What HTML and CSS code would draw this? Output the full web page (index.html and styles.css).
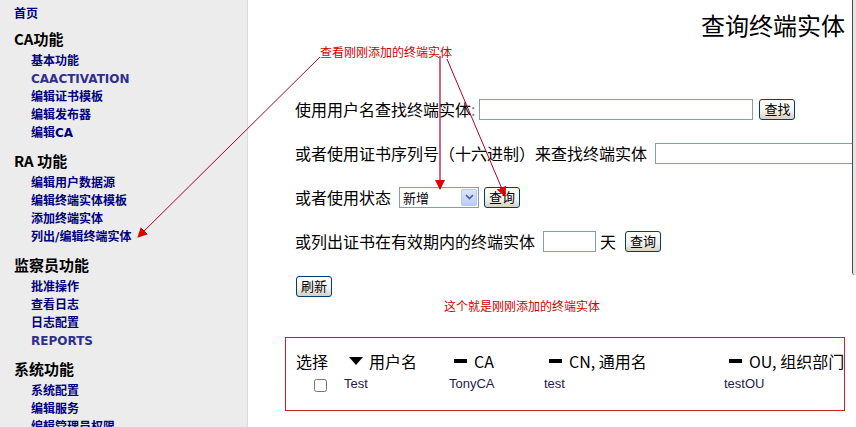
FILE: index.html
```html
<!DOCTYPE html>
<html lang="zh-CN">
<head>
    <meta charset="UTF-8">
    <title>查询终端实体</title>
    <link rel="stylesheet" href="styles.css">
</head>
<body>
    <div class="page">
        <nav class="menu">
            <a class="home" href="#">首页</a>

            <h3>CA功能</h3>
            <ul>
                <li><a href="#">基本功能</a></li>
                <li><a class="visited" href="#">CAACTIVATION</a></li>
                <li><a href="#">编辑证书模板</a></li>
                <li><a href="#">编辑发布器</a></li>
                <li><a href="#">编辑CA</a></li>
            </ul>

            <h3>RA 功能</h3>
            <ul>
                <li><a href="#">编辑用户数据源</a></li>
                <li><a href="#">编辑终端实体模板</a></li>
                <li><a href="#">添加终端实体</a></li>
                <li><a href="#">列出/编辑终端实体</a></li>
            </ul>

            <h3>监察员功能</h3>
            <ul>
                <li><a href="#">批准操作</a></li>
                <li><a href="#">查看日志</a></li>
                <li><a href="#">日志配置</a></li>
                <li><a class="visited" href="#">REPORTS</a></li>
            </ul>

            <h3>系统功能</h3>
            <ul>
                <li><a href="#">系统配置</a></li>
                <li><a href="#">编辑服务</a></li>
                <li><a href="#">编辑管理员权限</a></li>
            </ul>
        </nav>

        <main class="content">
            <h1>查询终端实体</h1>

            <form class="search">
                <div class="row">
                    <span class="label">使用用户名查找终端实体<span class="colon">:</span></span>
                    <input class="text wide" type="text">
                    <button class="btn" type="button">查找</button>
                </div>
                <div class="row">
                    <span class="label">或者使用证书序列号（十六进制）来查找终端实体</span>
                    <input class="text serial" type="text">
                </div>
                <div class="row">
                    <span class="label">或者使用状态</span>
                    <span class="select">
                        <span class="select-value">新增</span>
                        <span class="select-btn">
                            <svg width="9" height="6" viewBox="0 0 9 6"><path d="M1 1 L4.5 4.5 L8 1" fill="none" stroke="#4d6185" stroke-width="1.6"/></svg>
                        </span>
                    </span>
                    <button class="btn" type="button">查询</button>
                </div>
                <div class="row">
                    <span class="label">或列出证书在有效期内的终端实体</span>
                    <input class="text days" type="text">
                    <span class="unit">天</span>
                    <button class="btn" type="button">查询</button>
                </div>
                <div class="refresh-row">
                    <button class="btn" type="button">刷新</button>
                </div>
            </form>

            <p class="note">这个就是刚刚添加的终端实体</p>

            <div class="results">
                <div class="results-head">
                    <span class="cell">选择</span>
                    <span class="cell"><i class="sort-down"></i>用户名</span>
                    <span class="cell"><i class="sort-none"></i>CA</span>
                    <span class="cell"><i class="sort-none"></i>CN, 通用名</span>
                    <span class="cell"><i class="sort-none"></i>OU, 组织部门</span>
                </div>
                <div class="results-row">
                    <span class="check"><input type="checkbox"></span>
                    <span>Test</span>
                    <span>TonyCA</span>
                    <span>test</span>
                    <span>testOU</span>
                </div>
            </div>
        </main>

        <!-- annotations drawn on top of the screenshot -->
        <div class="callout">查看刚刚添加的终端实体</div>
        <svg class="arrows" width="856" height="427" viewBox="0 0 856 427">
            <defs>
                <marker id="head" markerWidth="10" markerHeight="10" refX="9" refY="5" orient="auto" markerUnits="userSpaceOnUse">
                    <path d="M0 0 L10 5 L0 10 Z" fill="#e00000"/>
                </marker>
            </defs>
            <line x1="320" y1="57" x2="138" y2="237" stroke="#b0002a" stroke-width="1" marker-end="url(#head)"/>
            <line x1="440" y1="56" x2="440" y2="189" stroke="#b0002a" stroke-width="1.2" marker-end="url(#head)"/>
            <line x1="447" y1="59" x2="505" y2="196" stroke="#b0002a" stroke-width="1" marker-end="url(#head)"/>
        </svg>
        <div class="frame-edge"></div>
    </div>
</body>
</html>
```

FILE: styles.css
```css
body {
    margin: 0;
    padding: 0;
    background-color: #fff;
    font-family: "Noto Sans CJK SC", "DejaVu Sans", sans-serif;
    overflow: hidden;
}

.page {
    position: relative;
    display: flex;
    width: 856px;
    height: 427px;
    overflow: hidden;
}

/* left menu */
.menu {
    flex: 0 0 248px;
    background-color: #ececec;
    border-right: 1px solid #dcdcdc;
    padding: 5px 0 0 14px;
    box-sizing: border-box;
}

.menu a {
    color: #00007f;
    font-family: "DejaVu Sans", "Noto Sans CJK SC", sans-serif;
    font-size: 12px;
    font-weight: bold;
    line-height: 18px;
    text-decoration: none;
}

.menu a.visited {
    color: #2f2f8f;
}

.menu .home {
    display: block;
    height: 18px;
}

.menu h3 {
    margin: 5px 0 0;
    font-size: 15px;
    line-height: 22px;
    font-weight: bold;
    color: #000;
}

.menu ul + h3 {
    margin-top: 9px;
}

.menu ul {
    list-style: none;
    margin: 1px 0 0;
    padding: 0 0 0 17px;
}

.menu li {
    height: 18px;
    font-size: 12px;
    line-height: 18px;
}

/* main area */
.content {
    flex: 1;
    min-width: 0;
    padding: 0 11px 0 47px;
}

.content h1 {
    margin: 10px 0 0;
    text-align: right;
    font-size: 24px;
    line-height: 30px;
    font-weight: normal;
    color: #000;
}

.search {
    margin-top: 57px;
}

.row {
    display: flex;
    align-items: center;
    height: 24px;
    margin-bottom: 20px;
    font-size: 16px;
    white-space: nowrap;
}

.label {
    color: #000;
}

.colon {
    color: #888;
}

.text {
    height: 21px;
    box-sizing: border-box;
    border: 1px solid #7f9db9;
    background: #fff;
    padding: 0 3px;
    margin: 0;
}

.wide {
    width: 274px;
    margin-left: 4px;
}

.serial {
    width: 220px;
    margin-left: 8px;
    flex-shrink: 0;
}

.days {
    width: 53px;
    margin-left: 8px;
}

.unit {
    margin-left: 4px;
}

.btn {
    height: 21px;
    padding: 0 4px;
    margin-left: 6px;
    border: 1px solid #003c74;
    border-radius: 3px;
    background: linear-gradient(#ffffff, #f2f1ea 60%, #d6d0c5);
    font-family: "Noto Sans CJK SC", sans-serif;
    font-size: 13px;
    line-height: 18px;
    color: #000;
    cursor: pointer;
}

.days + .unit + .btn {
    margin-left: 9px;
}

.select {
    display: inline-flex;
    align-items: center;
    justify-content: space-between;
    width: 80px;
    height: 21px;
    box-sizing: border-box;
    margin-left: 8px;
    border: 1px solid #7f9db9;
    background: #fff;
    font-size: 13px;
}

.select + .btn {
    margin-left: 5px;
}

.select-value {
    padding-left: 3px;
}

.select-btn {
    display: flex;
    align-items: center;
    justify-content: center;
    width: 16px;
    height: 17px;
    margin-right: 1px;
    border-radius: 2px;
    background: linear-gradient(#dce6fb, #b9cdf6);
    border: 1px solid #b5c8f0;
    box-sizing: border-box;
}

.refresh-row {
    margin-top: -1px;
}

.refresh-row .btn {
    margin-left: 1px;
}

.note {
    margin: 2px 0 0 149px;
    font-size: 12px;
    line-height: 14px;
    color: #d00000;
}

/* result table */
.results {
    width: 560px;
    box-sizing: border-box;
    margin: 24px 0 0 -10px;
    padding: 11px 0 17px 10px;
    border: 1px solid #c8202a;
}

.results-head,
.results-row {
    display: grid;
    grid-template-columns: 48px 105px 95px 180px 1fr;
}

.results-head {
    height: 20px;
    align-items: center;
    font-size: 16px;
    color: #000;
    margin-bottom: 6px;
}

.results-head .cell {
    display: flex;
    align-items: center;
    white-space: nowrap;
}

.results-head .cell + .cell {
    padding-left: 5px;
}

.sort-down {
    width: 0;
    height: 0;
    border-left: 7px solid transparent;
    border-right: 7px solid transparent;
    border-top: 8px solid #000;
    margin-right: 6px;
}

.sort-none {
    width: 13px;
    height: 4px;
    background: #000;
    margin-right: 7px;
}

.results-row {
    height: 18px;
    align-items: center;
    font-family: "Liberation Sans", Arial, sans-serif;
    font-size: 13px;
    color: #1e1e4a;
}

.check {
    display: flex;
    justify-content: center;
}

.check input {
    width: 13px;
    height: 13px;
    margin: 4px 0 0 0;
}

/* annotation layer */
.callout {
    position: absolute;
    left: 320px;
    top: 45px;
    font-size: 12px;
    line-height: 14px;
    color: #d00000;
}

.arrows {
    position: absolute;
    left: 0;
    top: 0;
    pointer-events: none;
}

.frame-edge {
    position: absolute;
    right: 0;
    top: 0;
    width: 3px;
    height: 275px;
    border-left: 1px solid #4a4a55;
    border-bottom-left-radius: 3px;
    background: #e4e4e4;
}
```
